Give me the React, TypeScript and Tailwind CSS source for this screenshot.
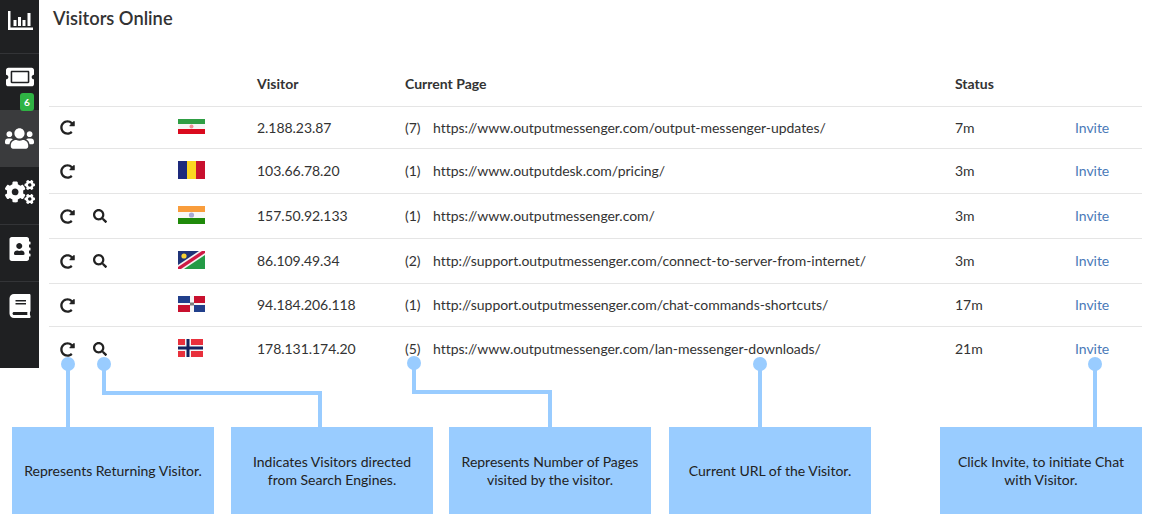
import { type FC, type ReactNode } from 'react';
import { FaAddressBook, FaBook, FaCogs, FaRedoAlt, FaSearch, FaTicketAlt, FaUsers } from 'react-icons/fa';

const IranFlag: FC = () => (
  <svg width="27" height="15" viewBox="0 0 27 15" className="mb-[3px]">
    <rect width="27" height="5" fill="#2f9e44" />
    <rect y="5" width="27" height="5" fill="#f6f6f6" />
    <rect y="10" width="27" height="5" fill="#da0a1e" />
    <circle cx="13.5" cy="7.5" r="2" fill="#ef8f96" />
  </svg>
);

const ChadFlag: FC = () => (
  <svg width="27" height="18" viewBox="0 0 27 18" className="mb-[3px]">
    <rect width="9" height="18" fill="#1d2a7c" />
    <rect x="9" width="9" height="18" fill="#fbd520" />
    <rect x="18" width="9" height="18" fill="#c8102e" />
  </svg>
);

const IndiaFlag: FC = () => (
  <svg width="27" height="18" viewBox="0 0 27 18" className="mb-[3px]">
    <rect width="27" height="6" fill="#f99d3c" />
    <rect y="6" width="27" height="6" fill="#f8f8f8" />
    <rect y="12" width="27" height="6" fill="#1f8a0a" />
    <circle cx="13.5" cy="9" r="2.6" fill="#a9a9d6" />
  </svg>
);

const NamibiaFlag: FC = () => (
  <svg width="27" height="18" viewBox="0 0 27 18" className="mb-[3px]">
    <rect width="27" height="18" fill="#249b46" />
    <polygon points="0,0 27,0 0,18" fill="#1f3478" />
    <polygon points="0,14 21,0 27,0 27,4 6,18 0,18" fill="#f4f4f4" />
    <polygon points="0,16 24,0 27,0 27,2 3,18 0,18" fill="#cf1a45" />
    <circle cx="6" cy="5" r="2.6" fill="#f7d335" />
  </svg>
);

const DominicanFlag: FC = () => (
  <svg width="27" height="16" viewBox="0 0 27 16" className="mb-[3px]">
    <rect width="27" height="16" fill="#f6f6f6" />
    <rect width="12" height="7" fill="#213f8b" />
    <rect x="16" width="11" height="7" fill="#c8102e" />
    <rect y="9" width="12" height="7" fill="#c8102e" />
    <rect x="16" y="9" width="11" height="7" fill="#213f8b" />
    <rect x="12" y="6.5" width="4" height="3" fill="#7d7d7d" />
  </svg>
);

const NorwayFlag: FC = () => (
  <svg width="25" height="18" viewBox="0 0 25 18" className="mb-[3px]">
    <rect width="25" height="18" fill="#e8303c" />
    <rect x="7" width="6" height="18" fill="#f4f4f4" />
    <rect y="6" width="25" height="6" fill="#f4f4f4" />
    <rect x="8.5" width="3" height="18" fill="#13235f" />
    <rect y="7.5" width="25" height="3" fill="#13235f" />
  </svg>
);

const ChartIcon: FC = () => (
  <svg width="25" height="19" viewBox="0 0 25 19" fill="#fff">
    <path d="M0 0h2.5v16.5H25V19H0z" />
    <rect x="5.5" y="9" width="3" height="6" />
    <rect x="10" y="6" width="3" height="9" />
    <rect x="14.5" y="9" width="3" height="6" />
    <rect x="19.5" y="2" width="3" height="13" />
  </svg>
);

const visitors: { flag: ReactNode; search: boolean; ip: string; pages: number; url: string; status: string; height: string }[] = [
  { flag: <IranFlag />, search: false, ip: '2.188.23.87', pages: 7, url: 'https://www.outputmessenger.com/output-messenger-updates/', status: '7m', height: 'h-[42px]' },
  { flag: <ChadFlag />, search: false, ip: '103.66.78.20', pages: 1, url: 'https://www.outputdesk.com/pricing/', status: '3m', height: 'h-[45px]' },
  { flag: <IndiaFlag />, search: true, ip: '157.50.92.133', pages: 1, url: 'https://www.outputmessenger.com/', status: '3m', height: 'h-[45px]' },
  { flag: <NamibiaFlag />, search: true, ip: '86.109.49.34', pages: 2, url: 'http://support.outputmessenger.com/connect-to-server-from-internet/', status: '3m', height: 'h-[45px]' },
  { flag: <DominicanFlag />, search: false, ip: '94.184.206.118', pages: 1, url: 'http://support.outputmessenger.com/chat-commands-shortcuts/', status: '17m', height: 'h-[43px]' },
  { flag: <NorwayFlag />, search: true, ip: '178.131.174.20', pages: 5, url: 'https://www.outputmessenger.com/lan-messenger-downloads/', status: '21m', height: 'h-[44px]' },
];

const callouts = [
  { text: 'Represents Returning Visitor.', margin: 'ml-[12px]' },
  { text: 'Indicates Visitors directed from Search Engines.', margin: 'ml-[17px]' },
  { text: 'Represents Number of Pages visited by the visitor.', margin: 'ml-[16px]' },
  { text: 'Current URL of the Visitor.', margin: 'ml-[18px]' },
  { text: 'Click Invite, to initiate Chat with Visitor.', margin: 'ml-[69px]' },
];

const gridColumns = 'grid grid-cols-[129px_79px_148px_550px_120px_1fr] items-center';

export default function App() {
  return (
    <div className="relative h-[527px] w-[1157px] overflow-hidden bg-white font-['Lato',sans-serif] text-[14px] text-[#333]">
      <div className="flex items-start">
        {/* Sidebar */}
        <div className="flex h-[368px] w-[39px] flex-col bg-[#1f2022] text-white">
          <div className="flex h-[54px] shrink-0 items-start justify-center border-b border-[#333437] pt-[11px] pl-[1px]">
            <ChartIcon />
          </div>
          <div className="relative flex h-[56px] shrink-0 items-start justify-center pt-[9px]">
            <FaTicketAlt size={28} />
            <span className="absolute top-[39px] left-[20px] flex h-[18px] w-[14px] items-center justify-center rounded-[3px] bg-[#2fb344] text-[10px] font-bold text-white">6</span>
          </div>
          <div className="flex h-[57px] shrink-0 items-center justify-center bg-[#3a3b3d]">
            <FaUsers size={29} />
          </div>
          <div className="flex h-[58px] shrink-0 items-start justify-center border-b border-[#333437] pt-[10px]">
            <FaCogs size={30} />
          </div>
          <div className="flex h-[57px] shrink-0 items-start justify-center border-b border-[#333437] pt-[12px]">
            <FaAddressBook size={24} />
          </div>
          <div className="flex flex-1 items-start justify-center pt-[12px]">
            <FaBook size={24} />
          </div>
        </div>

        {/* Main */}
        <div className="ml-[10px] w-[1093px]">
          <h1 className="ml-[4px] pt-[7px] text-[18.3px] leading-[22px] font-semibold">Visitors Online</h1>
          <div className={`${gridColumns} mt-[33px] h-[45px] border-b border-[#e5e5e5] pb-[2px] font-bold`}>
            <span className="col-start-3">Visitor</span>
            <span className="col-start-4">Current Page</span>
            <span className="col-start-5">Status</span>
          </div>
          {visitors.map((v, i) => {
            const textShift = i === 0 ? '' : 'mb-[2px]';
            return (
              <div key={v.ip} className={`${gridColumns} ${v.height} ${i < visitors.length - 1 ? 'border-b border-[#e5e5e5]' : ''} tracking-[-0.04px]`}>
                <div className="flex items-center pl-[11px] text-[#222]">
                  <FaRedoAlt size={15} />
                  {v.search && <FaSearch size={14} className="ml-[18px]" />}
                </div>
                <div className="flex">{v.flag}</div>
                <span className={textShift}>{v.ip}</span>
                <div className={`flex ${textShift}`}>
                  <span className="w-[28px]">({v.pages})</span>
                  <span>{v.url}</span>
                </div>
                <span className={textShift}>{v.status}</span>
                <a className={`text-[#4a7ab8] ${textShift}`}>Invite</a>
              </div>
            );
          })}
        </div>
      </div>

      {/* Callout boxes */}
      <div className="mt-[56px] flex">
        {callouts.map((c) => (
          <div key={c.text} className={`flex h-[87px] w-[202px] shrink-0 items-center justify-center bg-[#99ccff] px-[12px] text-center text-[14px] leading-[18px] text-[#222] ${c.margin}`}>
            {c.text}
          </div>
        ))}
      </div>

      {/* Connectors */}
      <svg className="pointer-events-none absolute top-0 left-0" width="1157" height="527" fill="none" stroke="#99ccff" strokeWidth="4">
        <path d="M68 364V427" />
        <path d="M104 364V393H320V427" />
        <path d="M414 363V392H550V427" />
        <path d="M760 364V427" />
        <path d="M1095 364V427" />
        <g fill="#99ccff" stroke="none">
          <circle cx="68" cy="364" r="7" />
          <circle cx="104" cy="364" r="7" />
          <circle cx="414" cy="363" r="7" />
          <circle cx="760" cy="364" r="7" />
          <circle cx="1095" cy="364" r="7" />
        </g>
      </svg>
    </div>
  );
}
